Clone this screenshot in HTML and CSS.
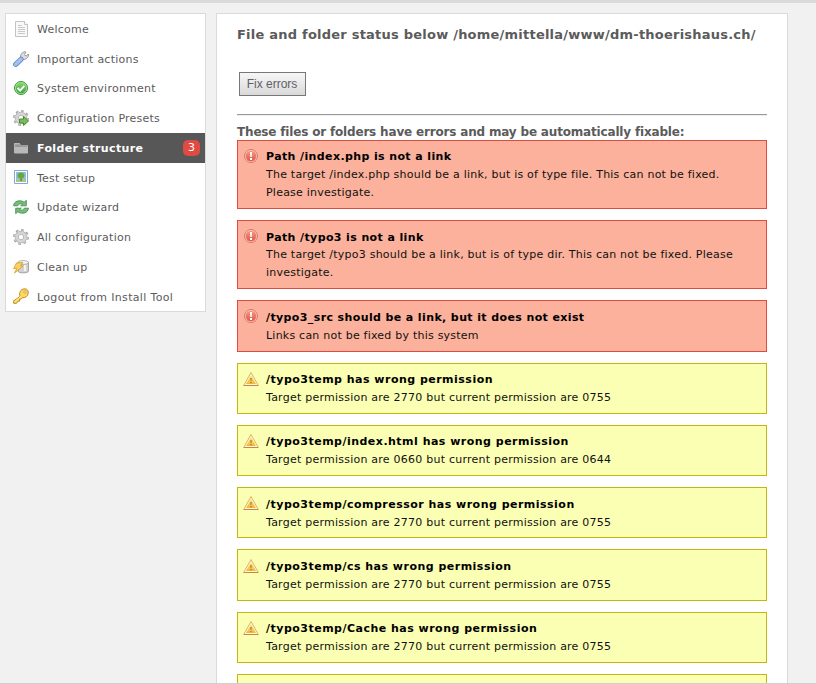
FILE: index.html
```html
<!DOCTYPE html>
<html lang="en">
<head>
<meta charset="utf-8">
<title>Install Tool</title>
<link rel="stylesheet" href="styles.css">
</head>
<body>
<svg class="defs" width="0" height="0" aria-hidden="true">
  <defs>
    <linearGradient id="red" x2="0" y2="1"><stop stop-color="#f79a86"/><stop offset="1" stop-color="#df584a"/></linearGradient>
    <linearGradient id="amber" x2="0" y2="1"><stop stop-color="#fbe892"/><stop offset="1" stop-color="#eeb936"/></linearGradient>
    <linearGradient id="green" x2="0" y2="1"><stop stop-color="#86d46c"/><stop offset="1" stop-color="#39a53a"/></linearGradient>
    <symbol id="error" viewBox="0 0 16 16"><circle cx="8" cy="8" r="6.5" fill="#f8c5b7" stroke="#d9786a"/><circle cx="8" cy="8" r="5.3" fill="url(#red)"/><path d="M7 4h2l-.3 5H7.3zM7 10h2v2H7z" fill="#fff"/></symbol>
    <symbol id="warning" viewBox="0 0 16 16"><path d="M8 1.5 15.3 14.5H.7z" fill="#fff9df" stroke="#dfb35c" stroke-linejoin="round"/><path d="M8 4 13 13H3z" fill="url(#amber)"/><path d="M.8 14.5h14.4" stroke="#cf8440"/><path d="M7.2 7h1.6l-.3 3h-1zM7.2 11h1.6v1.200H7.2z" fill="#b58420"/></symbol>
    <symbol id="gear" viewBox="0 0 16 16"><circle cx="8" cy="8" r="6.6" fill="none" stroke="#a2a2a2" stroke-width="2.6" stroke-dasharray="2.6 2.58"/><circle cx="8" cy="8" r="4.2" fill="none" stroke="#a2a2a2" stroke-width="4"/><circle cx="8" cy="8" r="4.2" fill="none" stroke="#d5d5d5" stroke-width="3"/><circle cx="8" cy="8" r="6.2" fill="none" stroke="#cecece" stroke-width="2" stroke-dasharray="1.5 3.37" stroke-dashoffset="-.5"/></symbol>
  </defs>
</svg>
<div class="page">
  <ul class="menu">
    <li><svg class="icon" viewBox="0 0 16 16"><path d="M2.500.5h9l3 3v12h-12z" fill="#f8f8f8" stroke="#c3c3c3"/><path d="M11.500.5v3h3" fill="#fff" stroke="#c3c3c3"/><path d="M5 4.500h4M5 6.500h7M5 8.500h7M5 10.500h7M5 12.500h7" stroke="#c9c9c9"/></svg><span>Welcome</span></li>
    <li><svg class="icon" viewBox="0 0 16 16"><path d="M7.500 7c-.3-3 1-5.500 4.500-6.400l1 .8-1.500 2 .5 1.200 1.500.2L15.200 3l.5 1c-.5 3.200-3 4.800-6.200 4.600z" fill="#ddd" stroke="#909090" stroke-width=".9"/><path d="m2.700 13.300 5.300-5" stroke="#6488c8" stroke-width="5.200" stroke-linecap="round"/><path d="m2.700 13.300 5.300-5" stroke="#a4c0ee" stroke-width="3.500" stroke-linecap="round"/></svg><span>Important actions</span></li>
    <li><svg class="icon" viewBox="0 0 16 16"><circle cx="8" cy="8" r="6.500" fill="#b4e2a4" stroke="#349536"/><circle cx="8" cy="8" r="5.200" fill="url(#green)"/><path d="m4.600 8 2.500 2.600 4.200-4.700" fill="none" stroke="#fff" stroke-width="1.900"/></svg><span>System environment</span></li>
    <li><svg class="icon" viewBox="0 0 16 16"><use href="#gear"/><path d="M6.500 9h4V6.500l5 4.500-5 4.500V13h-4z" fill="#79bd54" stroke="#3c842c" stroke-width=".9"/></svg><span>Configuration Presets</span></li>
    <li class="active"><svg class="icon" viewBox="0 0 16 16"><path d="M1.500 3.500h5l1 2h7v7.500h-13z" fill="#a2a2a2" stroke="#b8b8b8"/><path d="M2 6.500h12V13H2z" fill="#b9b9b9"/><path d="M2 6h12" stroke="#858585"/></svg><span>Folder structure</span><b class="badge">3</b></li>
    <li><svg class="icon" viewBox="0 0 16 16"><path d="M1.500 1.500h13v13h-13z" fill="#fff" stroke="#82a8d8"/><path d="M3 3h10v10H3z" fill="#8fbce8"/><path d="M3 10h10v3H3z" fill="#a5c884"/><path d="M7.500 8h1.200v4H7.500z" fill="#855f2b"/><ellipse cx="8" cy="6.500" rx="3.400" ry="2.900" fill="#65ab36"/></svg><span>Test setup</span></li>
    <li><svg class="icon" viewBox="0 0 16 16"><path id="turn" d="M.6 6.800C.8 2 7 .3 11.200 3.200L13.300 1.300v5.500H7.700l1.800-1.700C7.500 4.300 5.300 5 4.700 6.800z" fill="#79bd7b" stroke="#3a8746" stroke-width=".8"/><use href="#turn" transform="rotate(180 8 8)"/></svg><span>Update wizard</span></li>
    <li><svg class="icon" viewBox="0 0 16 16"><use href="#gear"/></svg><span>All configuration</span></li>
    <li><svg class="icon" viewBox="0 0 16 16"><path d="M5 3v9c0 2.500 10.500 2.500 10.500 0V3z" fill="#d2d2d2" stroke="#929292" stroke-width=".8"/><ellipse cx="10.200" cy="3.500" rx="5.200" ry="2" fill="#f5f5f5" stroke="#a3a3a3" stroke-width=".8"/><path d="M12 6v6" stroke="#f4f4f4" stroke-width="2"/><path d="M3.500 4 10 3.500 7.500 7h2.700L1.500 14l2.300-4.500H.6z" fill="#f8d263" stroke="#d59b27" stroke-width=".8"/></svg><span>Clean up</span></li>
    <li class="logout"><svg class="icon" viewBox="0 0 16 16"><path d="M7 8.500C5.800 5 7.500 1 11.500.8c3 0 4.200 2.500 3.700 4.700-.6 2.800-3 4.600-5.700 4.200L8 11.200H6.500v2H4.800L3.500 15.300H.7v-2.500z" fill="#fbd961" stroke="#c38b21"/><path d="m2 13.500 6-5.300" stroke="#fff1aa"/><circle cx="12" cy="3.900" r="1.200" fill="#fff" stroke="#c38b21" stroke-width=".7"/></svg><span>Logout from Install Tool</span></li>
  </ul>
  <main class="content">
    <h1>File and folder status below /home/mittella/www/dm-thoerishaus.ch/</h1>
    <button>Fix errors</button>
    <hr>
    <h2>These files or folders have errors and may be automatically fixable:</h2>
    <div class="message error"><svg class="icon"><use href="#error"/></svg><div><h3>Path /index.php is not a link</h3><p>The target /index.php should be a link, but is of type file. This can not be fixed.<br>Please investigate.</p></div></div>
    <div class="message error"><svg class="icon"><use href="#error"/></svg><div><h3>Path /typo3 is not a link</h3><p>The target /typo3 should be a link, but is of type dir. This can not be fixed. Please<br>investigate.</p></div></div>
    <div class="message error"><svg class="icon"><use href="#error"/></svg><div><h3>/typo3_src should be a link, but it does not exist</h3><p>Links can not be fixed by this system</p></div></div>
    <div class="message warning"><svg class="icon"><use href="#warning"/></svg><div><h3>/typo3temp has wrong permission</h3><p>Target permission are 2770 but current permission are 0755</p></div></div>
    <div class="message warning"><svg class="icon"><use href="#warning"/></svg><div><h3>/typo3temp/index.html has wrong permission</h3><p>Target permission are 0660 but current permission are 0644</p></div></div>
    <div class="message warning"><svg class="icon"><use href="#warning"/></svg><div><h3>/typo3temp/compressor has wrong permission</h3><p>Target permission are 2770 but current permission are 0755</p></div></div>
    <div class="message warning"><svg class="icon"><use href="#warning"/></svg><div><h3>/typo3temp/cs has wrong permission</h3><p>Target permission are 2770 but current permission are 0755</p></div></div>
    <div class="message warning"><svg class="icon"><use href="#warning"/></svg><div><h3>/typo3temp/Cache has wrong permission</h3><p>Target permission are 2770 but current permission are 0755</p></div></div>
    <div class="message warning empty"></div>
  </main>
</div>
</body>
</html>
```
FILE: styles.css
```css
* { box-sizing: border-box; }
body {
  margin: 0;
  height: 684px;
  overflow: hidden;
  background: #f1f1f1;
  border-top: 3px solid #dadada;
  border-bottom: 1px solid #cfcfcb;
  font-family: Verdana, "DejaVu Sans", sans-serif;
  font-size: 11px;
  color: #5b5b5b;
}
.defs { position: absolute; }
.page { display: flex; align-items: flex-start; gap: 10px; height: 680px; padding: 10px 0 0 5px; overflow: hidden; }
.menu { flex: none; width: 201px; margin: 0; padding: 0; list-style: none; background: #fff; border: 1px solid #dadada; letter-spacing: .235px; }
.menu li { display: flex; align-items: center; height: 29.72px; padding: 0 5px 0 7px; white-space: nowrap; }
.menu li span { margin-left: 8px; padding-top: 1.4px; }
.menu .active { background: #575757; color: #fff; font-weight: bold; letter-spacing: .36px; }
.menu .logout { letter-spacing: .33px; }
.icon { flex: none; width: 16px; height: 16px; }
.badge { margin-left: auto; width: 17px; height: 16px; border-radius: 5px; background: #dd4b43; font-weight: normal; letter-spacing: 0; line-height: 16px; text-align: center; }
.content { flex: none; width: 572px; height: 720px; padding: 12px 20px 0; background: #fff; border: 1px solid #dadada; }
h1, h2, h3, p { margin: 0; white-space: nowrap; }
h1 { font-size: 13px; line-height: 18px; letter-spacing: .226px; }
button { display: block; width: 67px; height: 24px; margin: 28px 0 0 2px; padding: 0 1px 0 0; border: 1px solid #777; background: linear-gradient(#f6f6f6, #d9d9d9); color: #606068; font: 12px "Liberation Sans", Arial, sans-serif; }
hr { height: 2px; margin: 18px 0 8px; border: 0; border-top: 1px solid #999; border-bottom: 1px solid #eee; }
h2 { height: 15.8px; font-size: 12px; line-height: 16px; letter-spacing: -.175px; }
.message { display: flex; gap: 7px; margin-bottom: 11px; padding: 7.5px 6px 6px 5px; border: 1px solid; color: #111; line-height: 17.9px; letter-spacing: .235px; }
.message .icon { margin-top: -.3px; }
.message h3 { font-size: 11px; color: #000; }
.error { background: #fbb19b; border-color: #dc4c42; }
.error .icon { margin-top: -.7px; }
.error h3 { letter-spacing: .385px; }
.error p { letter-spacing: .225px; }
.warning { background: #fbffb3; border-color: #c4b70d; }
.warning h3 { letter-spacing: .485px; }
.empty { height: 51.3px; }
```
